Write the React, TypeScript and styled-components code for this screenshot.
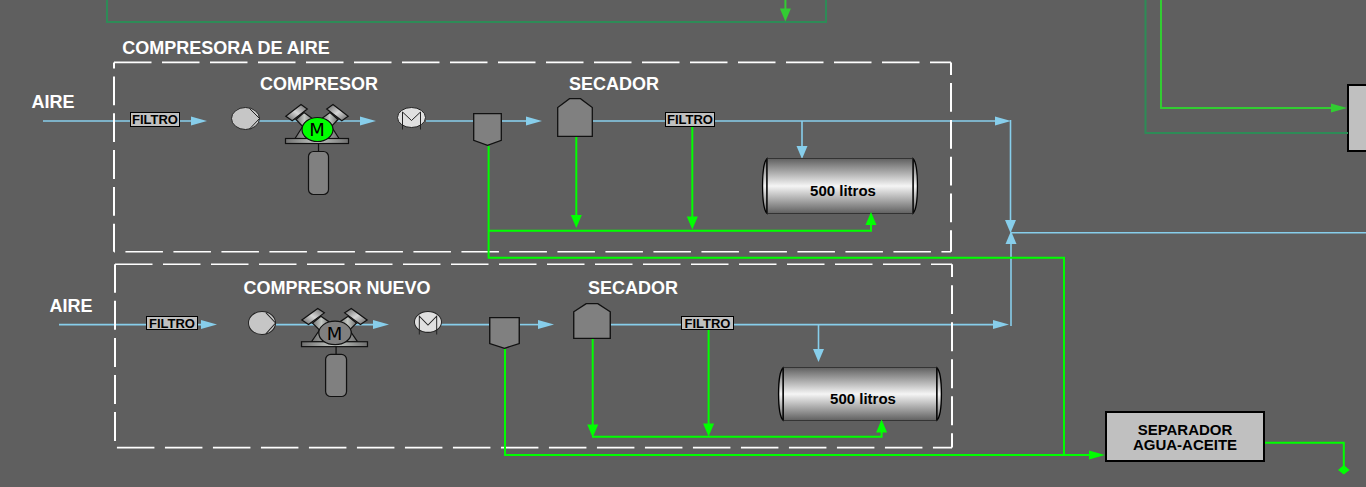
import React from 'react';
import styled, { createGlobalStyle } from 'styled-components';

const GREY = '#5f5f5f';
const AIR = '#87ceeb';
const DRAIN = '#00ff00';
const LIME = '#32cd32';
const SEA = '#2e8b57';

const GlobalStyle = createGlobalStyle`
  body {
    margin: 0;
    background: ${GREY};
    font-family: 'Liberation Sans', Arial, sans-serif;
  }
`;

const Canvas = styled.main`
  position: relative;
  width: 100%;
  min-height: 100vh;
  overflow: hidden;
  background: ${GREY};
`;

const PipeLayer = styled.svg`
  position: absolute;
  inset: 0;
  width: 100%;
  height: 100%;
  fill: none;
`;

interface Place {
  $x: number;
  $y: number;
}

interface Size extends Place {
  $w: number;
  $h: number;
}

const Caption = styled.span<Place>`
  position: absolute;
  left: ${(p) => p.$x}px;
  top: ${(p) => p.$y}px;
  transform: translate(-50%, -50%);
  color: #fff;
  font-size: 18px;
  font-weight: 700;
  line-height: 20px;
  white-space: nowrap;
`;

const Node = styled.div<Size>`
  position: absolute;
  box-sizing: border-box;
  left: ${(p) => p.$x}px;
  top: ${(p) => p.$y}px;
  width: ${(p) => p.$w}px;
  height: ${(p) => p.$h}px;
  display: flex;
  align-items: center;
  justify-content: center;
`;

const FilterBox = styled(Node)`
  border: 1px solid #000;
  background: #c0c0c0;
  font-size: 13px;
  font-weight: 700;
  line-height: 13px;
`;

const ProcessBox = styled(Node)`
  flex-direction: column;
  border: 2px solid #000;
  background: #c0c0c0;
  font-size: 15px;
  font-weight: 700;
  line-height: 15px;
`;

const Drawing = styled.svg`
  position: absolute;
  inset: 0;
  width: 100%;
  height: 100%;
  overflow: visible;
`;

const TankText = styled.span`
  position: relative;
  padding: 8px 0 0 6px;
  font-size: 15px;
  font-weight: 700;
  line-height: 15px;
`;

const MotorText = styled.span`
  position: relative;
  align-self: flex-start;
  padding-top: 16px;
  font-family: 'DejaVu Sans', Verdana, sans-serif;
  font-size: 18px;
  line-height: 20px;
`;

type Direction = 'right' | 'down' | 'up';

const arrowPoints: Record<Direction, string> = {
  right: '0,0 -16,-4.5 -16,4.5',
  down: '0,0 -5.5,-13 5.5,-13',
  up: '0,0 -5.5,13 5.5,13',
};

function Arrow({ x, y, to, color }: { x: number; y: number; to: Direction; color: string }) {
  return <polygon points={arrowPoints[to]} transform={`translate(${x} ${y})`} fill={color} />;
}

function Pipe({ d, color }: { d: string; color: string }) {
  return <path d={d} stroke={color} strokeWidth={color === AIR ? 1.6 : 2} />;
}

/* The dash pattern runs clockwise round the frame and is shorter on the upright sides. */
function Frame({ x, y, w, h, squeeze }: { x: number; y: number; w: number; h: number; squeeze: number }) {
  const dash = 37.5;
  const gap = 10.5;
  const upright = h / squeeze;
  const sides = [
    { from: [x, y], to: [x + w, y], k: 1, start: 0 },
    { from: [x + w, y], to: [x + w, y + h], k: squeeze, start: w },
    { from: [x + w, y + h], to: [x, y + h], k: 1, start: w + upright },
    { from: [x, y + h], to: [x, y], k: squeeze, start: 2 * w + upright },
  ];
  return (
    <g stroke="#fff">
      {sides.map((s, i) => (
        <line
          key={i}
          x1={s.from[0]}
          y1={s.from[1]}
          x2={s.to[0]}
          y2={s.to[1]}
          strokeWidth={i % 2 ? 2 : 1.6}
          strokeDasharray={`${dash * s.k} ${gap * s.k}`}
          strokeDashoffset={(s.start % (dash + gap)) * s.k}
        />
      ))}
    </g>
  );
}

function Blower(p: Size) {
  return (
    <Node {...p}>
      <Drawing viewBox="0 0 29 23" preserveAspectRatio="none" fill="none" stroke="#222">
        <ellipse cx="14.5" cy="11.5" rx="14" ry="11" fill="#c6c6c6" />
        <path d="M18.5 1.5 28.5 11.5 18.5 22" />
      </Drawing>
    </Node>
  );
}

function Cooler(p: Size) {
  return (
    <Node {...p}>
      <Drawing viewBox="0 0 29 23" preserveAspectRatio="none" fill="none" stroke="#222">
        <ellipse cx="14.5" cy="10.5" rx="14" ry="10" fill="#e0e0e0" />
        <path d="M5.5 22.5V5L14.5 13.5 23.5 5V22.5" />
      </Drawing>
    </Node>
  );
}

function Compressor({ id, running, ...p }: Size & { id: string; running: boolean }) {
  const metal = `url(#${id}-metal)`;
  const plate = `url(#${id}-plate)`;
  return (
    <Node {...p}>
      <Drawing viewBox="0 0 64 91" preserveAspectRatio="none" stroke="#111" strokeWidth="1.2">
        <defs>
          <linearGradient id={`${id}-metal`} x1="0" y1="1" x2="1" y2="0">
            <stop offset="0.1" stopColor="#777" />
            <stop offset="0.5" stopColor="#d6d6d6" />
            <stop offset="0.9" stopColor="#777" />
          </linearGradient>
          <linearGradient id={`${id}-plate`}>
            <stop offset="0" stopColor="#707070" />
            <stop offset="0.5" stopColor="#c4c8c4" />
            <stop offset="1" stopColor="#707070" />
          </linearGradient>
        </defs>
        <path d="M10 34.5 18 22H46L54 34.5Z" fill={plate} />
        <path d="M22 22H42L33 34Z" fill={GREY} stroke="none" />
        <g id={`${id}-head`}>
          <path d="M11 15.5 19 8.5 28 15 19 24Z" fill={plate} />
          <path d="M.8 12.2 16 .6 22.3 5 7.2 16.8Z" fill={metal} />
        </g>
        <use href={`#${id}-head`} transform="translate(64 0) scale(-1 1)" />
        <rect x="0.5" y="34.5" width="63" height="5" fill={plate} />
        <ellipse cx="32.5" cy="25.5" rx="15.5" ry="12" fill={running ? DRAIN : '#808080'} />
        <path d="M33.5 39.5V48" />
        <rect x="23.5" y="47.5" width="20" height="43" rx="5" fill="#808080" />
      </Drawing>
      <MotorText>M</MotorText>
    </Node>
  );
}

function Trap(p: Size) {
  return (
    <Node {...p}>
      <Drawing viewBox="0 0 29 33" preserveAspectRatio="none">
        <path d="M.7.7H28.3V27.3L14.5 32.3.7 27.3Z" fill="#808080" stroke="#111" strokeWidth="1.3" />
      </Drawing>
    </Node>
  );
}

function Dryer(p: Size) {
  return (
    <Node {...p}>
      <Drawing viewBox="0 0 36 39" preserveAspectRatio="none">
        <path d="M12.5.7H23.5L35.3 9.5V38.3H.7V9.5Z" fill="#808080" stroke="#111" strokeWidth="1.3" />
      </Drawing>
    </Node>
  );
}

function Tank({ id, ...p }: Size & { id: string }) {
  const fill = `url(#${id})`;
  return (
    <Node {...p}>
      <Drawing viewBox="0 0 156 56" preserveAspectRatio="none" stroke="#000">
        <defs>
          <linearGradient id={id} x1="0" y1="0" x2="0" y2="1">
            <stop offset="0" stopColor="#606060" />
            <stop offset="0.5" stopColor="#f5f5f5" />
            <stop offset="1" stopColor="#606060" />
          </linearGradient>
        </defs>
        <path d="M5 .8C-.9 6-.9 50 5 55.2Z" fill={fill} strokeWidth="1.3" />
        <path d="M151 .8C156.9 6 156.9 50 151 55.2Z" fill={fill} strokeWidth="1.3" />
        <rect x="5" y="0.5" width="146" height="55" fill={fill} stroke="#333" />
        <path d="M5 .5V55.5M151 .5V55.5" />
      </Drawing>
      <TankText>500 litros</TankText>
    </Node>
  );
}

const airPipes = [
  'M43 121H192',
  'M259 121H362',
  'M426 121H474',
  'M502 121H528',
  'M592 121H998',
  'M1010.5 120V222',
  'M802 121V148',
  'M59 324.6H203',
  'M276 324.6H375',
  'M441 324.6H490',
  'M519 324.6H541',
  'M610 324.6H996',
  'M1011 326V242',
  'M818.5 325V351',
];

const airArrows: [number, number, Direction][] = [
  [207, 121, 'right'],
  [376, 121, 'right'],
  [542, 121, 'right'],
  [1011, 121, 'right'],
  [802, 159, 'down'],
  [1010.5, 233, 'down'],
  [1011, 231, 'up'],
  [217, 324.6, 'right'],
  [389, 324.6, 'right'],
  [554, 324.6, 'right'],
  [1009, 324.6, 'right'],
  [818.5, 362, 'down'],
];

const drainPipes = [
  'M488.6 146V257.7H1064V455',
  'M489 230.7H871V223',
  'M576.3 137V217',
  'M692.3 127V219',
  'M505 349V455H1091',
  'M592.7 339V427',
  'M708.6 330V426',
  'M592 436.8H881.6V430',
  'M1265 442.7H1343.8V468',
];

const drainArrows: [number, number, Direction][] = [
  [576.3, 228, 'down'],
  [692.3, 229.5, 'down'],
  [871, 212, 'up'],
  [592.7, 437.5, 'down'],
  [708.6, 436.5, 'down'],
  [881.6, 419.5, 'up'],
  [1105, 455, 'right'],
];

export default function App() {
  return (
    <>
      <GlobalStyle />
      <Canvas>
        <PipeLayer aria-hidden="true">
          {airPipes.map((d) => (
            <Pipe key={d} d={d} color={AIR} />
          ))}
          <line x1="1011" y1="232.8" x2="100%" y2="232.8" stroke={AIR} strokeWidth="1.6" />
          {airArrows.map(([x, y, to]) => (
            <Arrow key={`${x}-${y}`} x={x} y={y} to={to} color={AIR} />
          ))}
          <Frame x={114} y={62.4} w={837} h={189.4} squeeze={0.767} />
          <Frame x={115} y={264.3} w={837} h={183.3} squeeze={0.772} />
          <Pipe d="M107 0V22H826V0" color={SEA} />
          <Pipe d="M785.4 0V11" color={LIME} />
          <Arrow x={785.4} y={21.5} to="down" color={LIME} />
          <Pipe d="M1161 0V108H1333" color={LIME} />
          <Arrow x={1347} y={108} to="right" color={LIME} />
        </PipeLayer>

        <Compressor id="compressor-1" running $x={285} $y={104} $w={64} $h={91} />
        <Compressor id="compressor-2" running={false} $x={301} $y={308} $w={67} $h={89} />
        <Blower $x={231} $y={107} $w={29} $h={23} />
        <Blower $x={248} $y={311} $w={28} $h={24} />
        <Cooler $x={397} $y={107} $w={29} $h={23} />
        <Cooler $x={414} $y={311} $w={28} $h={24} />
        <Trap $x={473} $y={113} $w={29} $h={33} />
        <Trap $x={489} $y={317} $w={31} $h={32} />
        <Dryer $x={557} $y={98} $w={36} $h={39} />
        <Dryer $x={573} $y={303} $w={38} $h={36} />
        <FilterBox $x={130} $y={112} $w={50} $h={15}>FILTRO</FilterBox>
        <FilterBox $x={665} $y={112} $w={50} $h={15}>FILTRO</FilterBox>
        <FilterBox $x={146} $y={316} $w={52} $h={14}>FILTRO</FilterBox>
        <FilterBox $x={681} $y={316} $w={53} $h={14}>FILTRO</FilterBox>
        <Tank id="tank-1" $x={762} $y={158} $w={156} $h={56} />
        <Tank id="tank-2" $x={778} $y={367} $w={164} $h={54} />
        <ProcessBox $x={1105} $y={411} $w={160} $h={51}>
          <span>SEPARADOR</span>
          <span>AGUA-ACEITE</span>
        </ProcessBox>
        <ProcessBox $x={1347} $y={84} $w={160} $h={68} />

        <PipeLayer aria-hidden="true">
          {drainPipes.map((d) => (
            <Pipe key={d} d={d} color={DRAIN} />
          ))}
          {drainArrows.map(([x, y, to]) => (
            <Arrow key={`${x}-${y}`} x={x} y={y} to={to} color={DRAIN} />
          ))}
          <polygon points="1338,470 1343.8,465 1349.6,470 1343.8,474.5" fill={DRAIN} />
          <Pipe d="M1145.5 0V133H1348" color={SEA} />
        </PipeLayer>

        <Caption $x={226} $y={48}>COMPRESORA DE AIRE</Caption>
        <Caption $x={319} $y={84}>COMPRESOR</Caption>
        <Caption $x={614} $y={84}>SECADOR</Caption>
        <Caption $x={53} $y={102}>AIRE</Caption>
        <Caption $x={337} $y={288}>COMPRESOR NUEVO</Caption>
        <Caption $x={633} $y={288}>SECADOR</Caption>
        <Caption $x={71} $y={306}>AIRE</Caption>
      </Canvas>
    </>
  );
}
